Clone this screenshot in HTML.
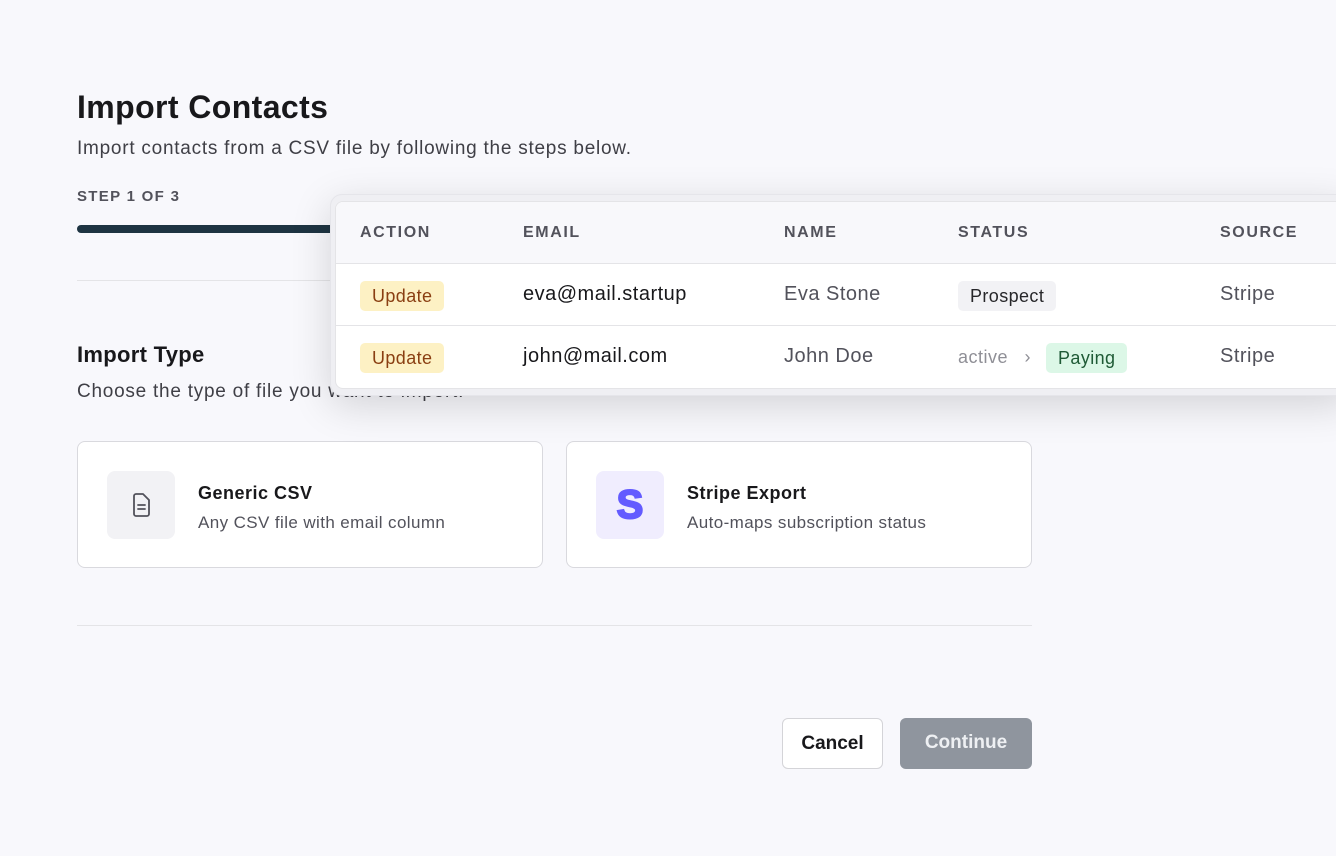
<!DOCTYPE html>
<html><head><style>
*{margin:0;padding:0;box-sizing:border-box}
body{width:1336px;height:856px;background:#f8f8fc;font-family:"Liberation Sans",sans-serif;position:relative;overflow:hidden;color:#18181b}
.a{position:absolute}
h1{position:absolute;left:77px;top:89px;font-size:32px;font-weight:700;letter-spacing:0.4px}
.sub{left:77px;top:138px;font-size:19px;color:#3f3f46;letter-spacing:0.75px}
.step{left:77px;top:188px;font-size:15px;color:#52525b;letter-spacing:1.3px;font-weight:600}
.bar{left:77px;top:225px;width:400px;height:8px;border-radius:4px;background:#1e3442}
.hr{left:77px;height:1px;background:#e4e4e7;width:955px}
.card{top:441px;width:466px;height:127px;background:#fff;border:1px solid #d9d9de;border-radius:8px}
.ic{position:absolute;left:29px;top:29px;width:68px;height:68px;border-radius:8px}
.ct{position:absolute;left:120px;top:41px;font-size:18px;font-weight:700;letter-spacing:0.5px}
.cd{position:absolute;left:120px;top:71px;font-size:17px;color:#52525b;letter-spacing:0.4px}
.ov{left:330px;top:194px;width:1020px;height:202px;background:#efeff3;border-radius:12px 0 0 12px;box-shadow:0 10px 40px rgba(0,0,0,0.15);border:1px solid #e5e5ea}
.tb{position:absolute;left:4px;top:6px;right:0;bottom:6px;background:#fff;border-radius:8px 0 0 8px;border:1px solid #e4e4e7;overflow:hidden}
.hd{position:absolute;left:0;right:0;top:0;height:62px;background:#f8f8fb;border-bottom:1px solid #e4e4e7}
.th{position:absolute;top:22px;font-size:16px;color:#52525b;letter-spacing:1.6px;font-weight:600}
.row{position:absolute;left:0;right:0;height:62px;border-bottom:1px solid #e4e4e7}
.td{position:absolute;top:19px;font-size:20px;color:#52525b;letter-spacing:0.5px}
.pill{position:absolute;top:17px;height:30px;line-height:30px;padding:0 12px;border-radius:5px;font-size:18px;letter-spacing:0.4px}
.btn{top:718px;height:51px;border-radius:6px;font-size:19px;font-weight:700;text-align:center;line-height:49px}
</style></head><body>
<h1>Import Contacts</h1>
<div class="a sub">Import contacts from a CSV file by following the steps below.</div>
<div class="a step">STEP 1 OF 3</div>
<div class="a bar"></div>
<div class="a hr" style="top:280px"></div>
<div class="a" style="left:77px;top:342px;font-size:22px;font-weight:700;letter-spacing:0.3px">Import Type</div>
<div class="a sub" style="top:381px">Choose the type of file you want to import.</div>
<div class="a card" style="left:77px"><div class="ic" style="background:#f2f2f5"><svg width="68" height="68" viewBox="0 0 68 68"><path d="M29 23h7l6 6v14a2 2 0 0 1-2 2H29a2 2 0 0 1-2-2V25a2 2 0 0 1 2-2z" fill="none" stroke="#52525b" stroke-width="1.8" stroke-linejoin="round"/><path d="M31 34h7M31 38h7" stroke="#52525b" stroke-width="1.8" stroke-linecap="round"/></svg></div><div class="ct">Generic CSV</div><div class="cd">Any CSV file with email column</div></div>
<div class="a card" style="left:566px"><div class="ic" style="background:#f0edfe;color:#635bff;font-size:40px;font-weight:900;text-align:center;line-height:68px;-webkit-text-stroke:2px #635bff">S</div><div class="ct">Stripe Export</div><div class="cd">Auto-maps subscription status</div></div>
<div class="a hr" style="top:625px"></div>
<div class="a btn" style="left:782px;width:101px;background:#fff;border:1px solid #d4d4d8;color:#18181b">Cancel</div>
<div class="a btn" style="left:900px;width:132px;background:#8f959e;color:#eef0f3">Continue</div>
<div class="a ov"><div class="tb">
<div class="hd"><div class="th" style="left:24px">ACTION</div><div class="th" style="left:187px">EMAIL</div><div class="th" style="left:448px">NAME</div><div class="th" style="left:622px">STATUS</div><div class="th" style="left:884px">SOURCE</div></div>
<div class="row" style="top:62px"><div class="pill" style="left:24px;background:#fdf1c4;color:#8a3f12">Update</div><div class="td" style="left:187px;color:#18181b">eva@mail.startup</div><div class="td" style="left:448px">Eva Stone</div><div class="pill" style="left:622px;background:#f2f2f5;color:#27272a">Prospect</div><div class="td" style="left:884px">Stripe</div></div>
<div class="row" style="top:124px;border:none"><div class="pill" style="left:24px;background:#fdf1c4;color:#8a3f12">Update</div><div class="td" style="left:187px;color:#18181b">john@mail.com</div><div class="td" style="left:448px">John Doe</div><div class="td" style="left:622px;font-size:18px;color:#8f8f96;top:21px">active &nbsp;&nbsp;›</div><div class="pill" style="left:710px;background:#dcf7e7;color:#1f5a36">Paying</div><div class="td" style="left:884px">Stripe</div></div>
</div></div>
</body></html>
